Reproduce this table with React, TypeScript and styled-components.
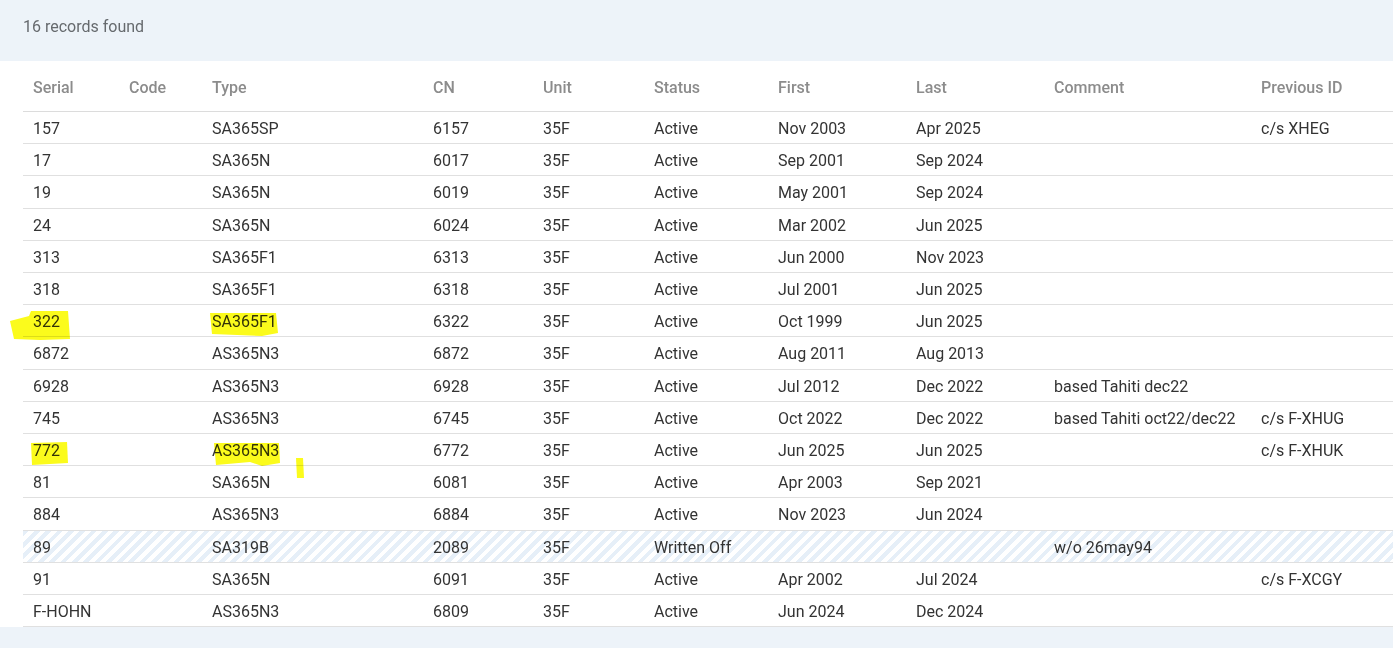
import styled, { createGlobalStyle } from 'styled-components'

const GlobalStyle = createGlobalStyle`
  html, body {
    margin: 0;
    padding: 0;
    background: #edf3f9;
    font-family: Roboto, 'Liberation Sans', Arial, sans-serif;
    overflow: hidden;
  }
`

const Page = styled.div`
  position: relative;
  width: 1393px;
  height: 648px;
`

const Summary = styled.div`
  height: 61px;
  box-sizing: border-box;
  padding: 16px 23px 0;
  font-size: 16px;
  line-height: 22px;
  color: #666a6e;
`

const Panel = styled.div`
  background: #fff;
  padding-left: 23px;
  overflow: hidden;
`

const Table = styled.table`
  border-collapse: collapse;
  table-layout: fixed;
  width: 1440px;
  font-size: 16px;
`

const Th = styled.th<{ $w: number }>`
  box-sizing: border-box;
  width: ${p => p.$w}px;
  text-align: left;
  font-weight: 500;
  color: #8c8c8c;
  padding: 15px 10px 11px;
  line-height: 24px;
  border-bottom: 1px solid #dcdcdc;
  white-space: nowrap;
`

const Tr = styled.tr<{ $striped?: boolean }>`
  background: ${p =>
    p.$striped
      ? 'repeating-linear-gradient(-45deg, #ffffff 0 4px, #e6eff8 4px 8px)'
      : '#fff'};
`

const Td = styled.td`
  padding: 5px 10px 3px;
  line-height: 23.2px;
  color: #333;
  white-space: nowrap;
  border-bottom: 1px solid #e0e0e0;
`

const Marker = styled.svg`
  position: absolute;
  left: 0;
  top: 0;
  pointer-events: none;
  mix-blend-mode: multiply;
`

const columns: [string, number][] = [
  ['Serial', 96],
  ['Code', 83],
  ['Type', 221],
  ['CN', 110],
  ['Unit', 111],
  ['Status', 124],
  ['First', 138],
  ['Last', 138],
  ['Comment', 207],
  ['Previous ID', 212],
]

type Row = [string, string, string, string, string, string, string, string, string, string]

const rows: Row[] = [
  ['157', '', 'SA365SP', '6157', '35F', 'Active', 'Nov 2003', 'Apr 2025', '', 'c/s XHEG'],
  ['17', '', 'SA365N', '6017', '35F', 'Active', 'Sep 2001', 'Sep 2024', '', ''],
  ['19', '', 'SA365N', '6019', '35F', 'Active', 'May 2001', 'Sep 2024', '', ''],
  ['24', '', 'SA365N', '6024', '35F', 'Active', 'Mar 2002', 'Jun 2025', '', ''],
  ['313', '', 'SA365F1', '6313', '35F', 'Active', 'Jun 2000', 'Nov 2023', '', ''],
  ['318', '', 'SA365F1', '6318', '35F', 'Active', 'Jul 2001', 'Jun 2025', '', ''],
  ['322', '', 'SA365F1', '6322', '35F', 'Active', 'Oct 1999', 'Jun 2025', '', ''],
  ['6872', '', 'AS365N3', '6872', '35F', 'Active', 'Aug 2011', 'Aug 2013', '', ''],
  ['6928', '', 'AS365N3', '6928', '35F', 'Active', 'Jul 2012', 'Dec 2022', 'based Tahiti dec22', ''],
  ['745', '', 'AS365N3', '6745', '35F', 'Active', 'Oct 2022', 'Dec 2022', 'based Tahiti oct22/dec22', 'c/s F-XHUG'],
  ['772', '', 'AS365N3', '6772', '35F', 'Active', 'Jun 2025', 'Jun 2025', '', 'c/s F-XHUK'],
  ['81', '', 'SA365N', '6081', '35F', 'Active', 'Apr 2003', 'Sep 2021', '', ''],
  ['884', '', 'AS365N3', '6884', '35F', 'Active', 'Nov 2023', 'Jun 2024', '', ''],
  ['89', '', 'SA319B', '2089', '35F', 'Written Off', '', '', 'w/o 26may94', ''],
  ['91', '', 'SA365N', '6091', '35F', 'Active', 'Apr 2002', 'Jul 2024', '', 'c/s F-XCGY'],
  ['F-HOHN', '', 'AS365N3', '6809', '35F', 'Active', 'Jun 2024', 'Dec 2024', '', ''],
]

const App = () => {
  return (
    <>
      <GlobalStyle />
      <Page>
        <Summary>16 records found</Summary>
        <Panel>
          <Table>
            <thead>
              <tr>
                {columns.map(([name, w]) => (
                  <Th key={name} $w={w}>{name}</Th>
                ))}
              </tr>
            </thead>
            <tbody>
              {rows.map(r => (
                <Tr key={r[0]} $striped={r[5] === 'Written Off'}>
                  {r.map((c, i) => (
                    <Td key={i}>{c}</Td>
                  ))}
                </Tr>
              ))}
            </tbody>
          </Table>
        </Panel>
        <Marker width="1393" height="648" viewBox="0 0 1393 648">
          <g fill="#fbfb1c">
            <path d="M10 321 L29 316 L31 311 L68 311 L70 339 L40 340 L14 339 Z" />
            <path d="M210 313 L276 313 L278 333 L262 336 L212 334 Z" />
            <path d="M31 443 L67 442 L68 463 L32 465 Z" />
            <path d="M214 443 L279 443 L280 463 L262 466 L250 462 L216 465 Z" />
            <path d="M296 458 L303 458 L304 478 L297 478 Z" />
          </g>
        </Marker>
      </Page>
    </>
  )
}

export default App
